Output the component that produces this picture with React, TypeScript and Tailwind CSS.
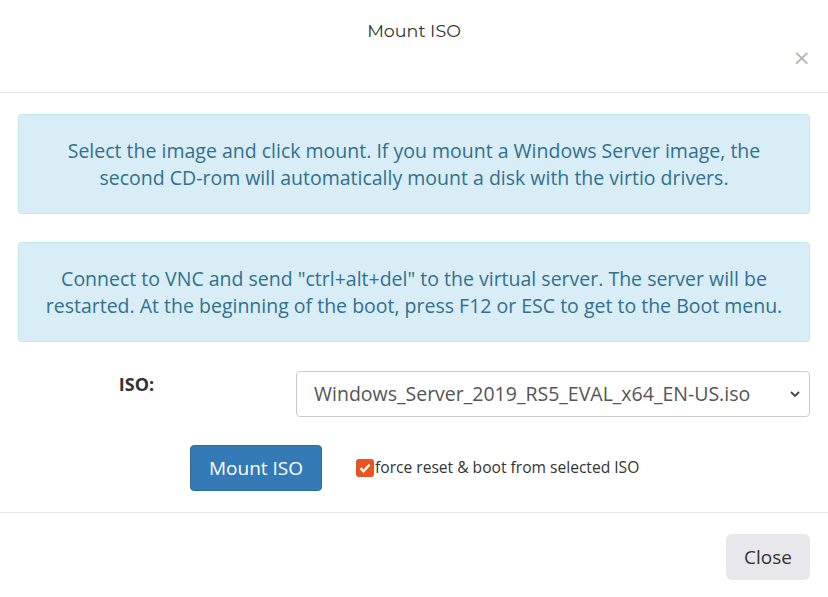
import { useState } from "react";

const alertClass =
  "bg-[#d9edf7] border border-[#bce8f1] rounded-[4px] text-[#31708f] text-[19.5px] leading-[27px] text-center px-4 py-[22px]";

export default function App() {
  const [iso, setIso] = useState("Windows_Server_2019_RS5_EVAL_x64_EN-US.iso");
  const [force, setForce] = useState(true);

  return (
    <div className="w-[828px] h-[597px] bg-white text-[#333] font-['Open_Sans',sans-serif] flex flex-col">
      {/* Header */}
      <div className="h-[93px] border-b border-[#e5e5e5] flex flex-col pt-[19px]">
        <h4 className="text-center text-[17.5px] leading-[24px] font-['Montserrat','Open_Sans',sans-serif] text-[#333]">
          Mount ISO
        </h4>
        <div className="flex justify-end mt-[3px] pr-[17px]">
          <button className="text-[#b5b5b5] text-[22px] leading-[24px] font-['DejaVu_Sans',sans-serif]">
            ×
          </button>
        </div>
      </div>

      {/* Body */}
      <div className="px-[18px] pt-[21px] pb-[21px] flex flex-col">
        <div className={alertClass}>
          Select the image and click mount. If you mount a Windows Server image, the
          <br />
          second CD-rom will automatically mount a disk with the virtio drivers.
        </div>
        <div className={`${alertClass} mt-[28px]`}>
          Connect to VNC and send "ctrl+alt+del" to the virtual server. The server will be
          <br />
          restarted. At the beginning of the boot, press F12 or ESC to get to the Boot menu.
        </div>

        <div className="flex mt-[29px]">
          <label className="w-[237px] text-center font-bold text-[18px] leading-[26px]">
            ISO:
          </label>
          <div className="relative ml-[41px] flex-1">
            <select
              value={iso}
              onChange={(e) => setIso(e.target.value)}
              className="appearance-none w-full h-[46px] border border-[#ccc] rounded-[4px] bg-white pl-[17px] pr-10 text-[19.5px] text-[#555] outline-none"
            >
              <option>Windows_Server_2019_RS5_EVAL_x64_EN-US.iso</option>
              <option>virtio-win.iso</option>
            </select>
            <svg
              className="absolute right-[9px] top-[18px] pointer-events-none"
              width="12"
              height="10"
              viewBox="0 0 12 10"
              fill="none"
              stroke="#444"
              strokeWidth="1.8"
            >
              <path d="M2 3l4 4 4-4" />
            </svg>
          </div>
        </div>

        <div className="flex items-center mt-[28px] pl-[172px]">
          <button className="h-[46px] w-[132px] bg-[#337ab7] border border-[#2e6da4] rounded-[4px] text-white text-[19px]">
            Mount ISO
          </button>
          <label className="flex items-center ml-[34px] text-[15.6px] text-[#333] cursor-pointer">
            <span
              onClick={() => setForce(!force)}
              className="w-[18px] h-[18px] rounded-[3px] bg-[#e95420] flex items-center justify-center"
            >
              {force && (
                <svg width="12" height="10" viewBox="0 0 12 10" fill="none" stroke="white" strokeWidth="2.4">
                  <path d="M1.5 5.2l3 3 6-6.5" />
                </svg>
              )}
            </span>
            <span className="ml-[1px]">force reset &amp; boot from selected ISO</span>
          </label>
        </div>
      </div>

      {/* Footer */}
      <div className="border-t border-[#e5e5e5] flex justify-end pt-[21px] pr-[18px]">
        <button className="h-[46px] w-[84px] bg-[#e8e8ec] rounded-[6px] text-[19px] text-[#333]">
          Close
        </button>
      </div>
    </div>
  );
}
